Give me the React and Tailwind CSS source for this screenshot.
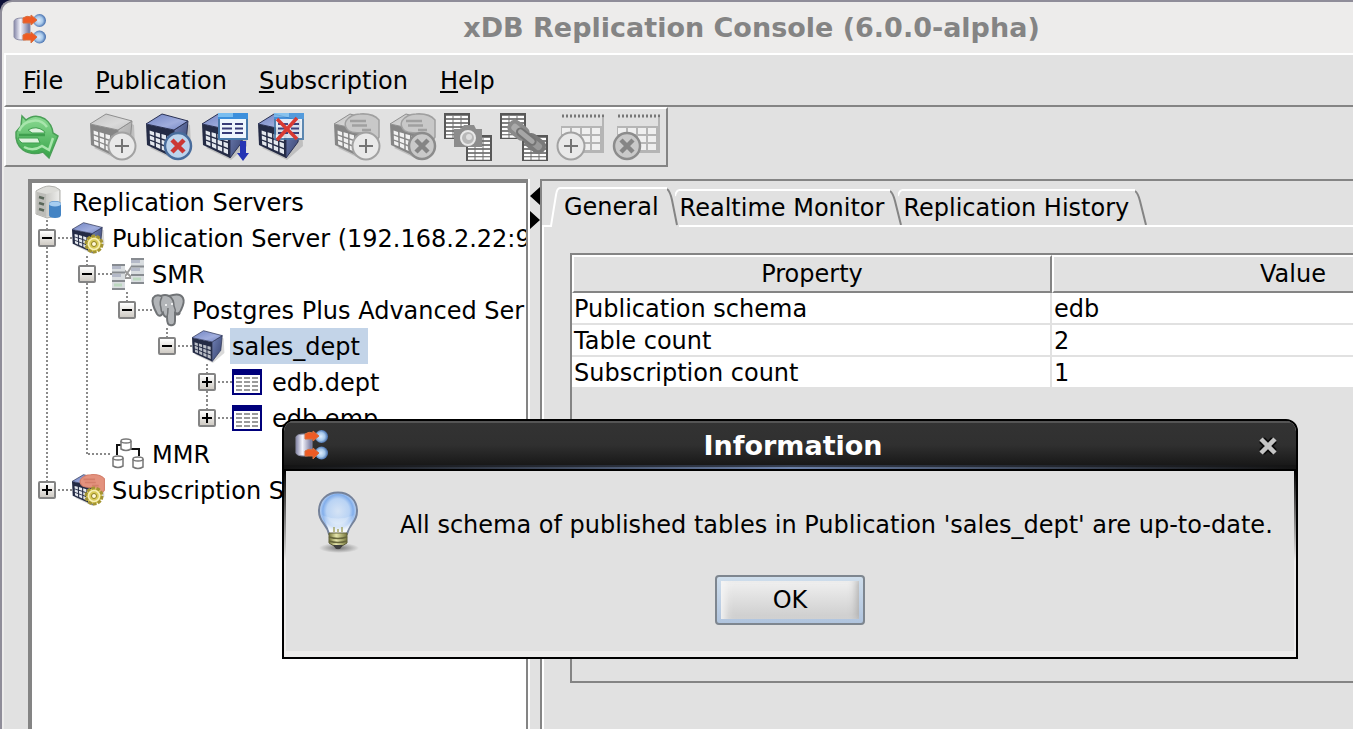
import React from "react";

/* ---------- icon helpers ---------- */

const lerp = (p, q, t) => [p[0] + (q[0] - p[0]) * t, p[1] + (q[1] - p[1]) * t];
const pts = (list) => list.map((p) => p.map((n) => n.toFixed(1)).join(",")).join(" ");

const TL = [0, 11], T = [16, 1], R = [42, 8], F = [28, 17], BF = [28, 45], BL = [1, 32], BR = [40, 29];

const onFace = (u, v) => lerp(lerp(TL, F, u), lerp(BL, BF, u), v);

const cells = [];
for (let c = 0; c < 4; c++) {
  for (let r = 0; r < 3; r++) {
    const u0 = 0.12 + c * 0.215, u1 = u0 + 0.16;
    const v0 = 0.27 + r * 0.23, v1 = v0 + 0.17;
    cells.push(pts([onFace(u0, v0), onFace(u1, v0), onFace(u1, v1), onFace(u0, v1)]));
  }
}

const BLUE = { top: "#7083c2", topLight: "#a0addd", side: "#36426f", sideLight: "#7080b4", face: "#242b45", cell: "#e4e8ee", edge: "#2a3153" };
const GRAY = { top: "#c4c4c4", topLight: "#dadada", side: "#a2a2a2", sideLight: "#c8c8c8", face: "#868686", cell: "#f1f1f1", edge: "#8f8f8f" };

function Cube({ tone, id }) {
  return (
    <g>
      <defs>
        <linearGradient id={id + "t"} x1="0" y1="0" x2="1" y2="1">
          <stop offset="0" stopColor={tone.top} />
          <stop offset=".6" stopColor={tone.topLight} />
          <stop offset="1" stopColor={tone.top} />
        </linearGradient>
        <linearGradient id={id + "s"} x1="0" y1="0" x2="1" y2="1">
          <stop offset="0" stopColor={tone.sideLight} />
          <stop offset="1" stopColor={tone.side} />
        </linearGradient>
      </defs>
      <polygon points="4,35 29,47 45,33 44,12 40,10" fill="#000" opacity=".15" />
      <polygon points={pts([TL, F, BF, BL])} fill={tone.face} />
      <polygon points={pts([F, R, BR, BF])} fill={`url(#${id}s)`} stroke={tone.edge} strokeWidth="1" />
      <polygon points={pts([TL, T, R, F])} fill={`url(#${id}t)`} stroke={tone.edge} strokeWidth="1" />
      {cells.map((p) => <polygon key={p} points={p} fill={tone.cell} />)}
    </g>
  );
}

function Svg({ className = "size-12", box = "0 0 48 48", children }) {
  return (
    <svg viewBox={box} className={"shrink-0 overflow-visible " + className} aria-hidden="true">{children}</svg>
  );
}

const PlusBadge = ({ cx = 32, cy = 33 }) => (
  <g>
    <circle cx={cx} cy={cy} r="13.5" fill="#e9e9e9" stroke="#a2a2a2" strokeWidth="2" />
    <path d={`M${cx - 7} ${cy}h14M${cx} ${cy - 7}v14`} stroke="#747474" strokeWidth="2" />
  </g>
);

const CrossBadge = ({ cx = 32, cy = 33 }) => (
  <g>
    <circle cx={cx} cy={cy} r="13" fill="#c9c9c9" stroke="#8c8c8c" strokeWidth="2.5" />
    <path d={`M${cx - 6} ${cy - 6}l12 12M${cx + 6} ${cy - 6}l-12 12`} stroke="#858585" strokeWidth="4.5" />
  </g>
);

const Hand = ({ fill, line }) => (
  <g>
    <path d="M12 8Q17 1 26 1Q39 0 45 7V24Q42 29 37 30L29 20Q15 20 13 16Q10 12 12 8z" fill={fill} stroke={line} strokeWidth="1.5" />
    <path d="M16 8h16M18 12.5h15M28 17h9" stroke={line} strokeWidth="2.5" />
  </g>
);

function AppIcon({ className }) {
  return (
    <Svg className={className} box="0 0 32 32">
      <defs>
        <linearGradient id="cyl"><stop offset="0" stopColor="#8486a8" /><stop offset=".4" stopColor="#f4f4fc" /><stop offset="1" stopColor="#6c6e96" /></linearGradient>
        <radialGradient id="ball" cx=".45"><stop offset="0" stopColor="#dcebfb" /><stop offset=".6" stopColor="#a7c8ea" /><stop offset="1" stopColor="#5078b4" /></radialGradient>
      </defs>
      <circle cx="25.5" cy="6.5" r="6.5" fill="url(#ball)" />
      <circle cx="25.5" cy="23" r="6.5" fill="url(#ball)" />
      <path d="M0 7q1-3 8-3t8 3v16q-1 3-8 3t-8-3z" fill="url(#cyl)" stroke="#8f90a8" strokeWidth="1" />
      <path d="M9 4q4-3 8-1V1l6 5-6 5V9H9zM9 21q4-3 8-1v-2l6 5-6 6v-3H9z" fill="#ee5b25" stroke="#d9703f" strokeWidth="1" />
    </Svg>
  );
}

function RefreshIcon() {
  return (
    <Svg>
      <defs><linearGradient id="gr" x1="0" y1="0" x2="0" y2="1"><stop offset="0" stopColor="#8ddb94" /><stop offset="1" stopColor="#35a347" /></linearGradient></defs>
      <path d="M8 3l4 4Q21 0 31 6Q38 11 39 20l5 3-9 22-6-6Q18 43 9 37Q1 31 2 19l5-6z" fill="url(#gr)" stroke="#4a9f57" strokeWidth="1.5" />
      <path d="M14 17Q22 12 30 18L31 20H18zM4 25h20l2 5h-18Q5 28 4 25z" fill="#dff2df" stroke="#3f9f4e" strokeWidth="1" />
      <path d="M5 22h26" fill="none" stroke="#3f9f4e" strokeWidth="2.5" />
      <path d="M5 18Q9 9 18 8Q27 6 33 14M10 34Q19 39 28 33l7 4 4-12" fill="none" stroke="#a8e5ac" strokeWidth="2.5" />
    </Svg>
  );
}

const AddPublicationIcon = () => (
  <Svg><Cube tone={GRAY} id="a" /><PlusBadge /></Svg>
);

const RemovePublicationIcon = () => (
  <Svg>
    <Cube tone={BLUE} id="b" />
    <circle cx="32" cy="33" r="13" fill="#bcd3ec" stroke="#486c9c" strokeWidth="2.5" />
    <path d="M26 27l12 12M38 27L26 39" stroke="#cc3734" strokeWidth="4.5" />
  </Svg>
);

const SheetWindow = ({ x, y }) => (
  <g transform={`translate(${x} ${y})`}>
    <rect x="1" y="1" width="28" height="25" fill="#eef6fd" stroke="#4779a9" strokeWidth="2" />
    <rect width="30" height="6" fill="#3c8fdc" />
    <rect width="15" height="4" fill="#79bdf0" />
    <path d="M4 11h10M17 11h8M4 15.5h10M17 15.5h8M4 20h10M17 20h8" stroke="#383c78" strokeWidth="2" />
  </g>
);

const UpdatePublicationIcon = () => (
  <Svg>
    <Cube tone={BLUE} id="c" />
    <SheetWindow x={16} y={0} />
    <path d="M38 28h6v12h3l-6 8-6-8h3z" fill="#2534b4" />
  </Svg>
);

const DropSheetIcon = () => (
  <Svg>
    <Cube tone={BLUE} id="d" />
    <g opacity=".85"><SheetWindow x={16} y={0} /></g>
    <path d="M19 6L39 26M39 5L19 27" stroke="#d93a33" strokeWidth="3.5" />
  </Svg>
);

const AddSubscriptionIcon = () => (
  <Svg><Cube tone={GRAY} id="e" /><Hand fill="#c8c8c8" line="#a0a0a0" /><PlusBadge /></Svg>
);

const RemoveSubscriptionIcon = () => (
  <Svg><Cube tone={GRAY} id="f" /><Hand fill="#c8c8c8" line="#a0a0a0" /><CrossBadge /></Svg>
);

const MiniGrid = ({ x, y }) => (
  <g transform={`translate(${x} ${y})`}>
    <rect width="26" height="26" fill="#585858" />
    <path d="M2 4h22M2 8h22M2 12h22M2 16h22M2 20h22M2 23.5h22" stroke="#fff" strokeWidth="2.5" />
    <path d="M9 3v22M17 3v22" stroke="#707070" strokeWidth="1" />
  </g>
);

const SnapshotIcon = () => (
  <Svg box="2 0 48 48">
    <MiniGrid x={0} y={0} /><MiniGrid x={22} y={22} />
    <path d="M10 16h7l3-4h10l2 4h6v18H10z" fill="#8c8c8c" />
    <circle cx="24" cy="25" r="7" fill="#b8b8b8" stroke="#e8e8e8" strokeWidth="2" />
    <circle cx="25" cy="24" r="3" fill="#dedede" />
  </Svg>
);

const SyncIcon = () => (
  <Svg box="2 0 48 48">
    <MiniGrid x={0} y={0} /><MiniGrid x={22} y={22} />
    <g transform="rotate(39 26 24)">
      <rect x="6" y="18" width="20" height="11" rx="5" fill="#aaa" stroke="#8a8a8a" strokeWidth="4" />
      <rect x="27" y="18" width="20" height="11" rx="5" fill="#999" stroke="#7a7a7a" strokeWidth="4" />
      <rect x="15" y="20" width="22" height="7" rx="3.5" fill="#a6a6a6" stroke="#747474" strokeWidth="2" />
    </g>
  </Svg>
);

const Calendar = () => (
  <g>
    <rect x="5" y="5" width="43" height="35" fill="#b5b5b5" />
    <rect x="5" y="5" width="41" height="8" fill="#e0e0e0" />
    <path d="M6 3h42" stroke="#777" strokeWidth="3" strokeDasharray="2 2" />
    {[0, 1, 2].map((r) => [0, 1, 2, 3].map((c) => (
      <rect key={r + "-" + c} x={6 + c * 10} y={15 + r * 8} width="8" height="6" fill="#efefef" />
    )))}
  </g>
);

const AddScheduleIcon = () => <Svg box="2 0 48 48"><Calendar /><PlusBadge cx={15} cy={33} /></Svg>;
const RemoveScheduleIcon = () => <Svg box="2 0 48 48"><Calendar /><CrossBadge cx={15} cy={33} /></Svg>;

/* ---------- tree icons (32 x 32) ---------- */

const Gear = () => (
  <g>
    <circle cx="22" cy="22" r="8" fill="#d9ca58" stroke="#a39433" strokeWidth="3" strokeDasharray="3.5 1.5" />
    <circle cx="22" cy="22" r="5.5" fill="none" stroke="#f7efb5" strokeWidth="1.5" />
    <circle cx="22" cy="22" r="2.5" fill="#fff8d8" stroke="#8e7e1b" />
  </g>
);

const ServersIcon = () => (
  <Svg className="size-8 ml-1" box="0 0 32 32">
    <defs><linearGradient id="sv"><stop offset="0" stopColor="#c8c8c4" /><stop offset="1" stopColor="#ececea" /></linearGradient></defs>
    <path d="M0 5Q8 0 13 0Q20 0 24 4v25l-13 3L0 28z" fill="#dcdcd8" stroke="#b0b0ac" />
    <path d="M10 8l13-3v23l-13 3z" fill="url(#sv)" />
    <path d="M1 6l9 2v23l-9-3z" fill="#bcbcb8" />
    <path d="M3 11l5 1.5M3 17l5 1.5M3 23l5 1.5" stroke="#5a665a" strokeWidth="2.5" />
    <path d="M13 18q0-3 6-3t6 3v11q0 3-6 3t-6-3z" fill="#4484c4" />
    <ellipse cx="19" cy="18" rx="6" ry="2.5" fill="#a6cdf0" />
  </Svg>
);

const PubServerIcon = () => (
  <Svg className="size-8" box="0 0 32 32"><g transform="scale(.72 .68)"><Cube tone={BLUE} id="g" /></g><Gear /></Svg>
);

const SubServerIcon = () => (
  <Svg className="size-8" box="0 0 32 32">
    <g transform="scale(.72 .68)"><Cube tone={BLUE} id="h" /><Hand fill="#e3927e" line="#d47e6a" /></g><Gear />
  </Svg>
);

const PublicationIcon = () => (
  <Svg className="size-8" box="0 0 32 32"><g transform="scale(.72 .7)"><Cube tone={{ ...BLUE, cell: "#b9bdc6" }} id="i" /></g></Svg>
);

const Stack = ({ x, y }) => (
  <g transform={`translate(${x} ${y})`}>
    <rect width="13" height="26" fill="#d9dde0" />
    <path d="M0 1h13M0 8.5h13M0 17h13M0 25h13" stroke="#878b90" strokeWidth="2" />
    <path d="M0 3.5h9M0 11.5h9" stroke="#b4b9c8" strokeWidth="3" />
    <path d="M2 21h8" stroke="#bcd8c0" strokeWidth="3" />
  </g>
);

const SmrIcon = () => (
  <Svg className="size-8" box="0 0 32 32">
    <path d="M12 20L20 8M12 12l8 8M12 20h8" stroke="#9a9a9a" strokeWidth="2" />
    <Stack x={0} y={6} /><Stack x={19} y={0} />
  </Svg>
);

const PostgresIcon = () => (
  <Svg className="size-8" box="0 0 32 32">
    <path d="M9 2Q13 0 17 2Q28-2 31 4Q33 8 29 16Q27 21 23 19V27Q23 32 18 31Q15 31 15 23Q12 23 11 19Q8 24 5 20Q-1 9 1 4Q4 0 9 2z" fill="#b2b5b8" stroke="#707376" strokeWidth="2" />
    <path d="M10 3Q7 8 9 14Q9 18 11 19M17 2Q22 5 22 12Q24 16 23 19M16 14Q16 19 15 23M23 20q4 2 5-1" fill="none" stroke="#707376" strokeWidth="1.5" />
    <path d="M13 11h2M19 10h2" stroke="#fff" strokeWidth="1.5" />
  </Svg>
);

const TableIcon = () => (
  <Svg className="size-8" box="0 0 32 32">
    <rect x="1" y="4" width="28" height="24" fill="#fff" stroke="#00007b" strokeWidth="2" />
    <rect x="0" y="3" width="30" height="6" fill="#00007b" />
    <path d="M4 12h22M4 16h22M4 20h22M4 24h22" stroke="#7b7b7b" strokeWidth="1.5" strokeDasharray="6 2" />
  </Svg>
);

const Drum = ({ x, y }) => (
  <g transform={`translate(${x} ${y})`} fill="#fff" stroke="#777" strokeWidth="1.5">
    <path d="M1 3v8q5 3 10 0V3" /><ellipse cx="6" cy="3" rx="5" ry="2" />
  </g>
);

const MmrIcon = () => (
  <Svg className="size-8" box="0 0 32 32">
    <path d="M9 7H5v10M19 11h8v7" fill="none" stroke="#111" strokeWidth="2" />
    <Drum x={8} y={0} /><Drum x={0} y={17} /><Drum x={20} y={18} />
  </Svg>
);

const BulbIcon = () => (
  <Svg className="h-16 w-12" box="0 0 48 64">
    <defs>
      <radialGradient id="glass" cx=".5" cy=".45"><stop offset="0" stopColor="#d5e3f5" /><stop offset=".6" stopColor="#b9d3f4" /><stop offset=".8" stopColor="#82aeeb" /><stop offset="1" stopColor="#c7dbf5" /></radialGradient>
      <radialGradient id="shade"><stop offset="0" stopColor="#777" /><stop offset="1" stopColor="#777" stopOpacity="0" /></radialGradient>
      <linearGradient id="brass"><stop offset="0" stopColor="#77783c" /><stop offset=".4" stopColor="#e6e6ac" /><stop offset="1" stopColor="#77783c" /></linearGradient>
      <linearGradient id="haze" x1="0" y1="0" x2="0" y2="1"><stop offset="0" stopColor="#fff" stopOpacity=".1" /><stop offset="1" stopColor="#fff" stopOpacity=".95" /></linearGradient>
    </defs>
    <ellipse cx="21" cy="57" rx="20" ry="5" fill="url(#shade)" />
    <path d="M20 1.5C9 1.5 1 9 1 20Q1 27 6 33Q10 38 11 43H29Q30 38 34 33Q39 27 39 20C39 9 31 1.5 20 1.5z" fill="url(#glass)" stroke="#75829a" strokeWidth="2" />
    <path d="M4 24Q20 31 36 24Q34 31 28 42H12Q8 31 4 24z" fill="url(#haze)" />
    <path d="M16 36v5M20 38v3M24 36v5" stroke="#a5a767" strokeWidth="1.5" />
    <path d="M11 42h18v10l-5 3-4 3-4-3-5-3z" fill="url(#brass)" stroke="#62623c" />
    <path d="M11 46q9 3 18 0M11 50q9 3 18 0" fill="none" stroke="#66663b" strokeWidth="1.5" />
    <path d="M15 54h10l-3 4h-4z" fill="#3f4040" />
  </Svg>
);

/* ---------- menu and toolbar ---------- */

function MenuBar() {
  return (
    <nav className="flex h-[54px] shrink-0 items-center gap-8 border-t-2 border-b-2 border-l-2 border-t-white border-b-[#848484] border-l-white pt-0.5 pl-[17px]">
      {["File", "Publication", "Subscription", "Help"].map((m) => (
        <button key={m} type="button">
          <span className="underline decoration-2 underline-offset-2">{m[0]}</span>{m.slice(1)}
        </button>
      ))}
    </nav>
  );
}

function ToolButton({ label, children }) {
  return <button type="button" aria-label={label} className="flex size-12">{children}</button>;
}

function Toolbar() {
  return (
    <div role="toolbar" className="flex h-[60px] w-[664px] shrink-0 items-center border-2 border-white border-r-[#848484] border-b-[#848484] pl-2">
      <ToolButton label="Refresh"><RefreshIcon /></ToolButton>
      <div className="ml-7 flex gap-2">
        <ToolButton label="Add publication"><AddPublicationIcon /></ToolButton>
        <ToolButton label="Remove publication"><RemovePublicationIcon /></ToolButton>
        <ToolButton label="Update publication"><UpdatePublicationIcon /></ToolButton>
        <ToolButton label="Remove tables"><DropSheetIcon /></ToolButton>
      </div>
      <div className="ml-7 flex gap-2">
        <ToolButton label="Add subscription"><AddSubscriptionIcon /></ToolButton>
        <ToolButton label="Remove subscription"><RemoveSubscriptionIcon /></ToolButton>
        <ToolButton label="Snapshot"><SnapshotIcon /></ToolButton>
        <ToolButton label="Synchronize"><SyncIcon /></ToolButton>
        <ToolButton label="Add schedule"><AddScheduleIcon /></ToolButton>
        <ToolButton label="Remove schedule"><RemoveScheduleIcon /></ToolButton>
      </div>
    </div>
  );
}

/* ---------- tree ---------- */

const nodes = [
  { depth: 0, label: "Replication Servers", Icon: ServersIcon },
  { depth: 1, label: "Publication Server (192.168.2.22:9", Icon: PubServerIcon, toggle: "-", more: true },
  { depth: 2, label: "SMR", Icon: SmrIcon, toggle: "-", more: true, pass: [true] },
  { depth: 3, label: "Postgres Plus Advanced Ser", Icon: PostgresIcon, toggle: "-", pass: [true, true] },
  { depth: 4, label: "sales_dept", Icon: PublicationIcon, toggle: "-", pass: [true, true, false], selected: true },
  { depth: 5, label: "edb.dept", Icon: TableIcon, toggle: "+", more: true, pass: [true, true, false, false] },
  { depth: 5, label: "edb.emp", Icon: TableIcon, toggle: "+", pass: [true, true, false, false] },
  { depth: 2, label: "MMR", Icon: MmrIcon, pass: [true] },
  { depth: 1, label: "Subscription Server", Icon: SubServerIcon, toggle: "+" },
];

const vDots = "w-0.5 bg-[repeating-linear-gradient(180deg,#8a8a8a_0_2px,transparent_2px_4px)]";
const hDots = "h-0.5 bg-[repeating-linear-gradient(90deg,#8a8a8a_0_2px,transparent_2px_4px)]";

function Elbow({ toggle, more }) {
  return (
    <span className="grid h-9 w-10 shrink-0 grid-cols-[30px_10px] items-center">
      <span className="flex h-9 flex-col items-center">
        <span className={"flex-1 " + vDots} />
        {toggle && (
          <button type="button" aria-label={toggle === "-" ? "Collapse" : "Expand"} className="flex size-[18px] items-center justify-center rounded-xs border-2 border-[#848484] bg-gradient-to-b from-white to-[#cfcbc4]">
            <svg viewBox="0 0 10 10" className="size-2.5" aria-hidden="true">
              <path d={toggle === "-" ? "M0 5h10" : "M0 5h10M5 0v10"} stroke="#000" strokeWidth="2" />
            </svg>
          </button>
        )}
        <span className={"flex-1 " + (more ? vDots : "")} />
      </span>
      <span className={(toggle ? "-ml-1 " : "-ml-3.5 ") + hDots} />
    </span>
  );
}

function Tree() {
  return (
    <div role="tree" className="w-[500px] shrink-0 overflow-hidden border-4 border-r-2 border-b-0 border-[#848484] bg-white pt-px">
      {nodes.map(({ depth, label, Icon, toggle, more, pass = [], selected }) => (
        <div key={label} role="treeitem" aria-level={depth + 1} className="flex h-9 items-center whitespace-nowrap">
          {pass.map((on, i) => (
            <span key={i} className="flex h-9 w-10 shrink-0 pl-3.5">
              {on && <span className={vDots} />}
            </span>
          ))}
          {depth > 0 && <Elbow toggle={toggle} more={more} />}
          <span className="flex w-9.5 shrink-0"><Icon /></span>
          <span className={"flex h-9 items-center pt-0.5 pl-0.5 " + (selected ? "bg-[#c3d4e8] pr-2" : "")}>{label}</span>
        </div>
      ))}
    </div>
  );
}

/* ---------- details ---------- */

function Tab({ label, active }) {
  return active ? (
    <button type="button" role="tab" aria-selected="true" className="-mb-0.5 ml-1.5 flex h-10 bg-[#e1e1e1]">
      <svg viewBox="0 0 12 40" className="h-10 w-3" aria-hidden="true">
        <path d="M0 39h3L8 8Q9 1 12 1" fill="none" stroke="#fff" strokeWidth="2" />
      </svg>
      <span className="flex h-full items-center border-t-2 border-white pr-2 pb-0.5 pl-1">{label}</span>
      <svg viewBox="0 0 12 40" className="h-10 w-3" aria-hidden="true">
        <path d="M0 2Q3 4 5 13L10 38" fill="none" stroke="#848484" strokeWidth="2" />
      </svg>
    </button>
  ) : (
    <button type="button" role="tab" aria-selected="false" className="-ml-1 flex h-9">
      <svg viewBox="0 0 4 36" className="h-9 w-1" aria-hidden="true">
        <path d="M0 7Q1 2 4 1" fill="none" stroke="#fff" strokeWidth="2" />
      </svg>
      <span className="flex h-full items-center border-t-2 border-white pr-1.5 pl-px">{label}</span>
      <svg viewBox="0 0 12 36" className="h-9 w-3" aria-hidden="true">
        <path d="M0 2Q3 4 5 12L11 36" fill="none" stroke="#848484" strokeWidth="2" />
      </svg>
    </button>
  );
}

const properties = [
  ["Publication schema", "edb"],
  ["Table count", "2"],
  ["Subscription count", "1"],
];

function Details() {
  return (
    <section className="flex min-w-0 flex-1 flex-col border-t-2 border-l-2 border-[#848484]">
      <div role="tablist" className="flex h-[46px] shrink-0 items-end border-b-2 border-white whitespace-nowrap">
        <Tab label="General" active />
        <Tab label="Realtime Monitor" />
        <Tab label="Replication History" />
      </div>
      <div className="flex min-h-0 flex-1 flex-col border-l-2 border-white pt-[26px] pb-[46px] pl-[26px]">
        <div className="flex-1 overflow-hidden border-2 border-r-0 border-[#848484]">
          <table className="w-[960px] table-fixed border-separate border-spacing-0">
            <thead>
              <tr className="h-[38px]">
                <th className="border-2 border-t-white border-r-[#848484] border-b-[#848484] border-l-white p-0 font-normal">Property</th>
                <th className="border-t-2 border-b-2 border-l-2 border-t-white border-b-[#848484] border-l-white p-0 font-normal">Value</th>
              </tr>
            </thead>
            <tbody className="bg-white">
              {properties.map(([name, value]) => (
                <tr key={name} className="leading-7">
                  <td className="border-r-2 border-b-2 border-[#e1e1e1] p-0 pt-0.5 pl-0.5">{name}</td>
                  <td className="border-b-2 border-[#e1e1e1] p-0 pt-0.5 pl-0.5">{value}</td>
                </tr>
              ))}
            </tbody>
          </table>
        </div>
      </div>
    </section>
  );
}

/* ---------- dialog ---------- */

function InfoDialog() {
  return (
    <div role="dialog" aria-labelledby="dlg-title" className="absolute top-[419px] left-[282px] w-[1016px] overflow-hidden rounded-t-xl border-2 border-black bg-[#e1e1e1]">
      <header className="border-b-2 border-black bg-linear-to-b from-[#333] via-[#303030] to-[#141414]">
        <div className="flex h-11 items-center border-t-2 border-[#555] pt-1 pr-[18px] pl-3">
          <AppIcon className="size-8" />
          <h2 id="dlg-title" className="flex-1 text-center text-[27px] font-bold text-white">Information</h2>
          <button type="button" aria-label="Close" className="flex size-5">
            <svg viewBox="0 0 20 20" className="size-5" aria-hidden="true">
              <path d="M4 4l12 12M16 4L4 16" stroke="#0c0c0c" strokeWidth="8" />
              <path d="M3 3l14 14M17 3L3 17" stroke="#c6c6c6" strokeWidth="4.5" />
            </svg>
          </button>
        </div>
        <div className="h-0.5 bg-linear-to-r from-[#141414] via-[#343d50] to-[#141414]" />
        <div className="h-0.5 bg-linear-to-r from-[#141414] via-[#6d82aa] to-[#141414]" />
      </header>
      <div className="bg-[linear-gradient(180deg,#000_0,#edeceb_90px)] px-0.5">
        <div className="flex flex-col items-center border-b-[6px] border-b-[#edeceb] bg-[#e1e1e1] pt-5 pb-[26px]">
          <div className="flex w-full items-center gap-[34px] pl-8">
            <BulbIcon />
            <p className="pt-1 whitespace-nowrap">All schema of published tables in Publication 'sales_dept' are up-to-date.</p>
          </div>
          <button type="button" className="mt-5 h-[50px] w-[150px] rounded-sm border-2 border-[#7e868f] bg-linear-to-b from-[#cfdeec] to-[#b0c4de] p-1">
            <span className="flex h-full items-center justify-center bg-linear-to-b from-[#f0f0f0] to-[#cdcdcd] shadow-[inset_8px_0_8px_-4px_#f6f6f6,inset_-8px_0_8px_-6px_#aaa]">OK</span>
          </button>
        </div>
      </div>
    </div>
  );
}

export default function App() {
  return (
    <div className="relative h-screen overflow-hidden bg-[#0d1038] font-[DejaVu_Sans,sans-serif] text-2xl leading-8 text-black">
      <div className="flex h-full flex-col rounded-tl-xl border-t-2 border-l-2 border-[#8f8d99] bg-[#edeceb] pl-0.5">
        <header className="flex h-[51px] shrink-0 items-center pt-1 pl-2.5">
          <AppIcon className="size-8" />
          <h1 className="flex-1 pb-1 pl-[104px] text-center text-[27px] font-bold text-[#848484]">xDB Replication Console (6.0.0-alpha)</h1>
        </header>
        <div className="flex min-h-0 flex-1 flex-col bg-[#e1e1e1]">
          <MenuBar />
          <Toolbar />
          <main className="flex min-h-0 flex-1 pt-3 pl-6">
            <Tree />
            <div className="flex w-3 shrink-0 flex-col border-l-2 border-white pt-2">
              <svg viewBox="0 0 10 42" className="h-[42px] w-2.5" aria-label="Resize panels" role="img">
                <path d="M10 0v18L0 9zM0 24v18l10-9z" />
              </svg>
            </div>
            <Details />
          </main>
        </div>
      </div>
      <InfoDialog />
    </div>
  );
}
